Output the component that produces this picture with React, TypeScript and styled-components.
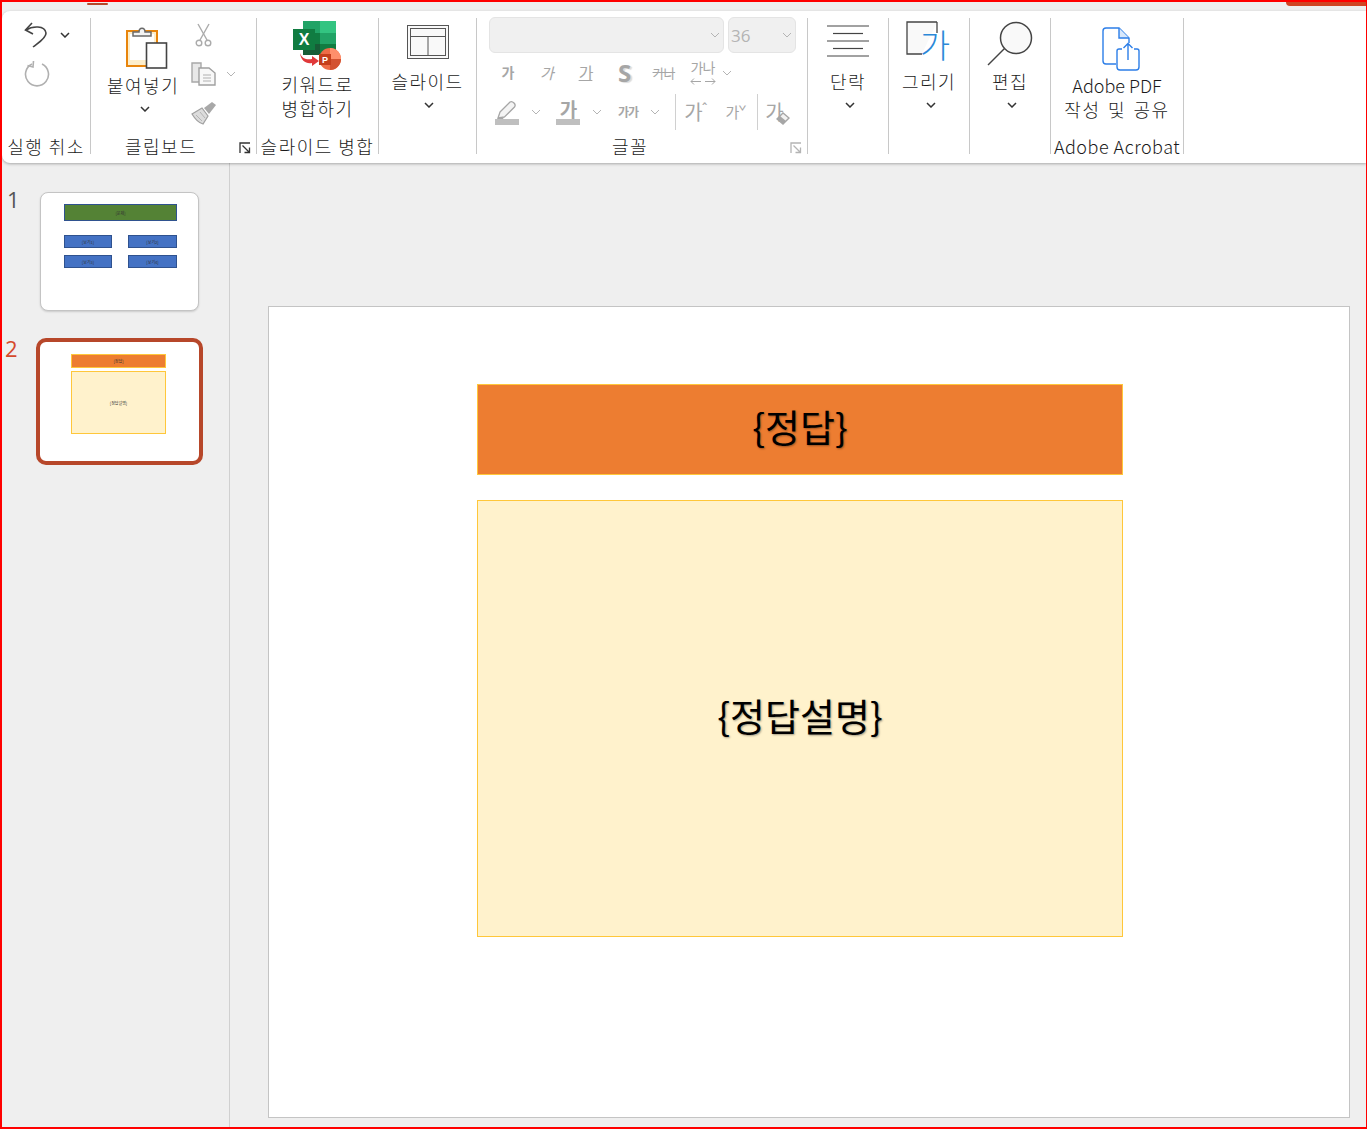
import React from "react";
import styled, { createGlobalStyle } from "styled-components";

const FONT = `"Noto Sans CJK KR", "Noto Sans", sans-serif`;
const TEXT = "#1a1a1a";
const DISABLED = "#a6a6a6";

const GlobalStyle = createGlobalStyle`
  html, body {
    margin: 0;
    padding: 0;
    background: #efefef;
  }
  * {
    box-sizing: border-box;
  }
`;

const Chevron = ({ off }: { off?: boolean }) => (
  <ChevronSvg width="10" height="6" viewBox="0 0 10 6">
    <polyline
      points="1,1 5,5 9,1"
      fill="none"
      stroke={off ? "#b4b4b4" : "#333"}
      strokeWidth={off ? 1 : 1.5}
    />
  </ChevronSvg>
);

const UndoIcon = () => (
  <svg width="24" height="26" viewBox="0 0 24 26">
    <path d="M8 1 L1.5 8 L9 12" fill="none" stroke="#444" strokeWidth="1.6" />
    <path d="M2 8 C8 4 21 3 22 11 C22.5 16 14 21 9 25" fill="none" stroke="#444" strokeWidth="1.6" />
  </svg>
);

const RedoIcon = () => (
  <svg width="26" height="27" viewBox="0 0 26 27">
    <path d="M8 4 A11.5 11.5 0 1 0 18 4" fill="none" stroke="#b0b0b0" strokeWidth="1.6" />
    <path d="M9.5 1 L9 7 L3.5 5.5" fill="none" stroke="#b0b0b0" strokeWidth="1.6" />
  </svg>
);

const PasteIcon = () => (
  <svg width="50" height="45" viewBox="-8 0 50 45">
    <rect x="1" y="7" width="30" height="35" fill="#fdeecb" stroke="#e8850c" strokeWidth="2" />
    <rect x="4" y="10" width="24" height="26" fill="#fff" />
    <path d="M7 12 V8 H13 C13 3 19 3 19 8 H25 V12 Z" fill="#f4f4f4" stroke="#6a6a6a" strokeWidth="1.5" />
    <rect x="20.5" y="19" width="20" height="25" fill="#fff" stroke="#444" strokeWidth="1.6" />
  </svg>
);

const ScissorsIcon = () => (
  <svg width="18" height="24" viewBox="0 0 18 24">
    <g fill="none" stroke="#ababab" strokeWidth="1.4">
      <path d="M3 1 L12 17" />
      <path d="M14 1 L5 17" />
      <circle cx="4" cy="20" r="2.8" />
      <circle cx="13" cy="20" r="2.8" />
    </g>
  </svg>
);

const CopyIcon = () => (
  <svg width="26" height="24" viewBox="0 0 26 24">
    <path d="M1 1 H10 V20 H1 Z" fill="#e8e8e8" stroke="#a8a8a8" strokeWidth="1.4" />
    <path d="M8 6 H18 L24 11 V23 H8 Z" fill="#f8f8f8" stroke="#a0a0a0" strokeWidth="1.4" />
    <path d="M12 13 H20 M12 16 H20 M12 19 H20" stroke="#b0b0b0" strokeWidth="1" />
  </svg>
);

const BrushIcon = () => (
  <svg width="26" height="24" viewBox="0 0 26 24">
    <path d="M1 13 L11 7 L17 15 L12 23 C8 22 4 18 1 13 Z" fill="#dcdcdc" stroke="#a0a0a0" strokeWidth="1.2" />
    <path d="M5 14 L11 20 M9 11 L14 17" stroke="#b4b4b4" strokeWidth="1" />
    <path d="M13 7 L21 1 L25 4 L18 13 Z" fill="#a8a8a8" />
  </svg>
);

const ExcelIcon = () => (
  <svg width="50" height="50" viewBox="0 0 50 50">
    <rect x="10" y="1" width="17" height="12" fill="#21a366" />
    <rect x="27" y="1" width="16" height="12" fill="#33c481" />
    <rect x="10" y="13" width="17" height="11" fill="#107c41" />
    <rect x="27" y="13" width="16" height="11" fill="#21a366" />
    <rect x="10" y="24" width="17" height="11" fill="#185c37" />
    <rect x="27" y="24" width="16" height="11" fill="#107c41" />
    <rect x="0" y="9" width="22" height="21" fill="#107c41" />
    <text x="11" y="25" textAnchor="middle" fontFamily="Liberation Sans, sans-serif" fontWeight="700" fontSize="16" fill="#fff">
      X
    </text>
    <path d="M7 33 C9 39 14 40 19 39 L19 36 L26 41 L19 46 L19 43 C13 44 8 41 7 33 Z" fill="#e0383a" />
    <circle cx="37" cy="39" r="11" fill="#ed6c47" />
    <path d="M37 28 A11 11 0 0 1 48 39 H37 Z" fill="#ff8f6b" />
    <path d="M37 50 A11 11 0 0 0 48 39 H37 Z" fill="#d35230" />
    <rect x="26" y="34" width="12" height="11" fill="#c43e1c" />
    <text x="32" y="43" textAnchor="middle" fontFamily="Liberation Sans, sans-serif" fontWeight="700" fontSize="9" fill="#fff">
      P
    </text>
  </svg>
);

const LayoutIcon = () => (
  <svg width="42" height="34" viewBox="0 0 42 34">
    <rect x="0.5" y="0.5" width="41" height="33" fill="#f9f9f9" stroke="#555" />
    <rect x="3.5" y="3.5" width="35" height="27" fill="#f9f9f9" stroke="#555" />
    <path d="M3.5 11.5 H38.5 M21 11.5 V30.5" stroke="#555" fill="none" />
  </svg>
);

const ParagraphIcon = () => (
  <svg width="42" height="32" viewBox="0 0 42 32">
    <g stroke="#444" strokeWidth="1.2">
      <path d="M0 1 H42" />
      <path d="M6 8.5 H36" />
      <path d="M0 16 H42" />
      <path d="M6 23.5 H36" />
      <path d="M0 31 H42" />
    </g>
  </svg>
);

const DrawIcon = () => (
  <svg width="46" height="50" viewBox="0 0 46 50">
    <path d="M31 1 H1 V33 H16" fill="#f9f9f9" stroke="#444" strokeWidth="1.3" />
    <path d="M31 1 V12" stroke="#444" strokeWidth="1.3" />
    <text x="29" y="37" textAnchor="middle" fontFamily='"Noto Sans CJK KR", sans-serif' fontSize="33" fontWeight="300" fill="#2b88d8">
      가
    </text>
  </svg>
);

const SearchIcon = () => (
  <svg width="46" height="46" viewBox="0 0 46 46">
    <circle cx="29" cy="17" r="15.5" fill="#f9f9f9" stroke="#444" strokeWidth="1.5" />
    <path d="M17.5 27.5 L1 44" stroke="#444" strokeWidth="1.5" />
  </svg>
);

const AdobeIcon = () => (
  <svg width="50" height="44" viewBox="-10 0 50 44">
    <path d="M14 37 H4 Q1 37 1 34 V4 Q1 1 4 1 H17 L27 11 V16" fill="none" stroke="#2c7ee8" strokeWidth="1.4" />
    <path d="M17 1 V11 H27" fill="#d8e8fb" stroke="#2c7ee8" strokeWidth="1.4" />
    <path d="M20 22 H17 Q15 22 15 24 V40 Q15 43 18 43 H34 Q37 43 37 40 V24 Q37 22 35 22 H32" fill="none" stroke="#2c7ee8" strokeWidth="1.4" />
    <path d="M26 33 V17 M21.5 21 L26 16.5 L30.5 21" fill="none" stroke="#2c7ee8" strokeWidth="1.4" />
  </svg>
);

const Launcher = ({ off }: { off?: boolean }) => (
  <LauncherSvg width="12" height="12" viewBox="0 0 12 12">
    <g fill="none" stroke={off ? "#b4b4b4" : "#333"} strokeWidth="1.3">
      <path d="M1 11 V1 H11" />
      <path d="M3.5 3.5 L10.5 10.5 M10.5 5.5 V10.5 H5.5" />
    </g>
  </LauncherSvg>
);

const PenIcon = () => (
  <svg width="24" height="25" viewBox="0 0 24 25">
    <path d="M5 12 L15 2 Q17 1 19 3 Q21 5 19.5 7 L9.5 17 L3 18 Z" fill="#f4f4f4" stroke="#a6a6a6" strokeWidth="1.3" />
    <path d="M3 18 L1 20 H7 L9.5 17 Z" fill="#a6a6a6" />
    <rect x="0" y="19" width="24" height="6" fill="#bfbfbf" />
  </svg>
);

const SmallArrows = () => (
  <svg width="26" height="9" viewBox="0 0 26 9">
    <path d="M11 4.5 H1 M4 1.5 L1 4.5 L4 7.5 M15 4.5 H25 M22 1.5 L25 4.5 L22 7.5" fill="none" stroke="#a6a6a6" strokeWidth="1" />
  </svg>
);

const LargeButton = ({
  icon,
  slot,
  top,
  lines,
  chevron,
}: {
  icon: React.ReactNode;
  slot: number;
  top: number;
  lines: string[];
  chevron?: boolean;
}) => (
  <Large>
    <IconSlot $height={slot} $top={top}>
      {icon}
    </IconSlot>
    {lines.map((line) => (
      <LargeText key={line} $latin={/[A-Za-z]/.test(line)}>
        {line}
      </LargeText>
    ))}
    {chevron && (
      <ChevronRow>
        <Chevron />
      </ChevronRow>
    )}
  </Large>
);

const Thumb = ({ index, active, children }: { index: number; active?: boolean; children: React.ReactNode }) => (
  <ThumbRow $active={active}>
    <ThumbNumber $active={active}>{index}</ThumbNumber>
    <ThumbCard $active={active}>{children}</ThumbCard>
  </ThumbRow>
);

const App = (): JSX.Element => {
  return (
    <Frame>
      <GlobalStyle />
      <TitleStrip>
        <ActiveTabMark />
        <CornerMark />
      </TitleStrip>

      <Ribbon>
        <Group $w={89}>
          <Body>
            <UndoStack>
              <UndoRow>
                <UndoIcon />
                <Chevron />
              </UndoRow>
              <RedoIcon />
            </UndoStack>
          </Body>
          <GroupLabel>
            <LabelText>실행 취소</LabelText>
          </GroupLabel>
        </Group>

        <Group $w={166}>
          <Body>
            <ClipboardRow>
              <LargeButton icon={<PasteIcon />} slot={55} top={6} lines={["붙여넣기"]} chevron />
              <ClipboardTools>
                <ToolRow>
                  <ToolIcon>
                    <ScissorsIcon />
                  </ToolIcon>
                </ToolRow>
                <ToolRow>
                  <ToolIcon>
                    <CopyIcon />
                  </ToolIcon>
                  <Chevron off />
                </ToolRow>
                <ToolRow>
                  <ToolIcon>
                    <BrushIcon />
                  </ToolIcon>
                </ToolRow>
              </ClipboardTools>
            </ClipboardRow>
          </Body>
          <GroupLabel $left={34}>
            <LabelText>클립보드</LabelText>
            <Launcher />
          </GroupLabel>
        </Group>

        <Group $w={122}>
          <Body>
            <LargeButton icon={<ExcelIcon />} slot={54} top={2} lines={["키워드로", "병합하기"]} />
          </Body>
          <GroupLabel>
            <LabelText>슬라이드 병합</LabelText>
          </GroupLabel>
        </Group>

        <Group $w={98}>
          <Body>
            <LargeButton icon={<LayoutIcon />} slot={51} top={7} lines={["슬라이드"]} chevron />
          </Body>
        </Group>

        <Group $w={331}>
          <Body>
            <FontPanel>
              <SelectRow>
                <FontSelect $w={235}>
                  <span />
                  <Chevron off />
                </FontSelect>
                <FontSelect $w={68}>
                  <SizeValue>36</SizeValue>
                  <Chevron off />
                </FontSelect>
              </SelectRow>

              <GlyphRow>
                <Cell $w={39}>
                  <Glyph $size={14} $bold>가</Glyph>
                </Cell>
                <Cell $w={39}>
                  <Glyph $size={15} $italic>가</Glyph>
                </Cell>
                <Cell $w={39}>
                  <Glyph $size={16} $underline>가</Glyph>
                </Cell>
                <Cell $w={39}>
                  <ShadowS>S</ShadowS>
                </Cell>
                <Cell $w={39}>
                  <Glyph $size={13} $strike>가나</Glyph>
                </Cell>
                <Cell $w={39}>
                  <SpacingCell>
                    <Glyph $size={14}>가나</Glyph>
                    <SmallArrows />
                  </SpacingCell>
                </Cell>
                <Chevron off />
              </GlyphRow>

              <GlyphRow $tall>
                <Cell $w={28} $ml={5}>
                  <PenIcon />
                </Cell>
                <Cell $w={11} $ml={9}>
                  <Chevron off />
                </Cell>
                <Cell $w={26} $ml={14}>
                  <ColorGlyph>
                    <Glyph $size={19} $bold>가</Glyph>
                    <ColorBar />
                  </ColorGlyph>
                </Cell>
                <Cell $w={11} $ml={10}>
                  <Chevron off />
                </Cell>
                <Cell $w={28} $ml={12}>
                  <Glyph $size={12} $bold>가가</Glyph>
                </Cell>
                <Cell $w={11} $ml={7}>
                  <Chevron off />
                </Cell>
                <RowDivider $ml={15} />
                <Cell $w={26} $ml={7}>
                  <Glyph $size={20}>가</Glyph>
                  <Caret>ˆ</Caret>
                </Cell>
                <Cell $w={24} $ml={15}>
                  <Glyph $size={15}>가</Glyph>
                  <Caret>ˇ</Caret>
                </Cell>
                <RowDivider $ml={9} />
                <Cell $w={27} $ml={3}>
                  <Glyph $size={20}>가</Glyph>
                  <EraserSvg width="14" height="16" viewBox="0 0 14 16">
                    <path d="M1 10 L7 4 L13 9 L7 15 Z" fill="#f2f2f2" stroke="#a6a6a6" strokeWidth="1.4" />
                    <path d="M1 10 L4 7 L10 12 L7 15 Z" fill="#a6a6a6" />
                  </EraserSvg>
                </Cell>
              </GlyphRow>
            </FontPanel>
          </Body>
          <GroupLabel $left={135}>
            <LabelText>글꼴</LabelText>
            <Launcher off />
          </GroupLabel>
        </Group>

        <Group $w={81}>
          <Body>
            <LargeButton icon={<ParagraphIcon />} slot={51} top={7} lines={["단락"]} chevron />
          </Body>
        </Group>

        <Group $w={81}>
          <Body>
            <LargeButton icon={<DrawIcon />} slot={51} top={3} lines={["그리기"]} chevron />
          </Body>
        </Group>

        <Group $w={81}>
          <Body>
            <LargeButton icon={<SearchIcon />} slot={51} top={3} lines={["편집"]} chevron />
          </Body>
        </Group>

        <Group $w={133}>
          <Body>
            <LargeButton icon={<AdobeIcon />} slot={55} top={9} lines={["Adobe PDF", "작성 및 공유"]} />
          </Body>
          <GroupLabel>
            <LabelText $latin>Adobe Acrobat</LabelText>
          </GroupLabel>
        </Group>
      </Ribbon>

      <Workspace>
        <Sidebar>
          <Thumb index={1}>
            <MiniBar $bg="#548235" $line="#2f528f" $w={113} $h={17}>
              {"{문제}"}
            </MiniBar>
            <MiniGrid>
              <MiniBar $bg="#4472c4" $line="#2f528f" $w={48} $h={13}>{"{보기1}"}</MiniBar>
              <MiniBar $bg="#4472c4" $line="#2f528f" $w={49} $h={13}>{"{보기2}"}</MiniBar>
              <MiniBar $bg="#4472c4" $line="#2f528f" $w={48} $h={13}>{"{보기3}"}</MiniBar>
              <MiniBar $bg="#4472c4" $line="#2f528f" $w={49} $h={13}>{"{보기4}"}</MiniBar>
            </MiniGrid>
          </Thumb>
          <Thumb index={2} active>
            <MiniStack>
              <MiniBar $bg="#ed7d31" $line="#ffc73a" $w={95} $h={14}>{"{정답}"}</MiniBar>
              <MiniBar $bg="#fff2cc" $line="#ffc73a" $w={95} $h={63}>{"{정답설명}"}</MiniBar>
            </MiniStack>
          </Thumb>
        </Sidebar>

        <Main>
          <Slide>
            <AnswerTitle>{"{정답}"}</AnswerTitle>
            <AnswerBody>{"{정답설명}"}</AnswerBody>
          </Slide>
        </Main>
      </Workspace>
    </Frame>
  );
};

export default App;

const Frame = styled.div`
  width: 1367px;
  height: 1129px;
  overflow: hidden;
  display: flex;
  flex-direction: column;
  background: #efefef;
  border-style: solid;
  border-color: #ff0000;
  border-width: 2px 1px 2px 2px;
  font-family: ${FONT};
  color: ${TEXT};
`;

const TitleStrip = styled.div`
  height: 9px;
  flex-shrink: 0;
  display: flex;
  justify-content: space-between;
  align-items: flex-start;
  padding-left: 85px;
`;

const ActiveTabMark = styled.div`
  width: 21px;
  height: 2px;
  margin-top: 1px;
  border-radius: 1px;
  background: #b7472a;
`;

const CornerMark = styled.div`
  width: 80px;
  height: 4px;
  background: #d04423;
  border-bottom-left-radius: 4px;
`;

const Ribbon = styled.div`
  height: 152px;
  flex-shrink: 0;
  display: flex;
  padding-top: 7px;
  background: #fff;
  border-radius: 8px 0 0 8px;
  box-shadow: 0 1px 3px rgba(0, 0, 0, 0.3);
  position: relative;
  z-index: 1;
`;

const Group = styled.section<{ $w: number }>`
  width: ${(p) => p.$w}px;
  height: 136px;
  flex-shrink: 0;
  display: flex;
  flex-direction: column;
  border-right: 1px solid #c8c8c8;
`;

const Body = styled.div`
  flex: 1;
  min-height: 0;
`;

const GroupLabel = styled.div<{ $left?: number }>`
  height: 20px;
  display: grid;
  grid-template-columns: ${(p) => (p.$left ? `${p.$left}px auto 1fr` : "1fr auto 1fr")};
  align-items: center;
  padding-right: ${(p) => (p.$left ? 5 : 0)}px;
`;

const LabelText = styled.span<{ $latin?: boolean }>`
  grid-column: 2;
  font-size: 18px;
  line-height: 24px;
  height: 20px;
  white-space: nowrap;
  font-weight: 300;
  letter-spacing: ${(p) => (p.$latin ? 0.5 : 1.5)}px;
`;

const LauncherSvg = styled.svg`
  grid-column: 3;
  justify-self: end;
  margin-top: 8px;
`;

const ChevronSvg = styled.svg`
  display: block;
  flex-shrink: 0;
`;

const Large = styled.div`
  display: flex;
  flex-direction: column;
  align-items: center;
`;

const IconSlot = styled.div<{ $height: number; $top: number }>`
  height: ${(p) => p.$height}px;
  padding-top: ${(p) => p.$top}px;
  & > svg {
    display: block;
  }
`;

const LargeText = styled.div<{ $latin?: boolean }>`
  font-size: 18px;
  font-weight: 300;
  line-height: 24px;
  height: 24px;
  white-space: nowrap;
  letter-spacing: ${(p) => (p.$latin ? 0 : 1.5)}px;
  word-spacing: ${(p) => (p.$latin ? 0 : 2)}px;
`;

const ChevronRow = styled.div`
  height: 24px;
  display: flex;
  align-items: center;
  padding-left: 3px;
`;

const UndoStack = styled.div`
  display: flex;
  flex-direction: column;
  gap: 12px;
  padding: 4px 0 0 22px;
  & > svg {
    display: block;
  }
`;

const UndoRow = styled.div`
  display: flex;
  align-items: center;
  gap: 12px;
`;

const ClipboardRow = styled.div`
  display: flex;
  padding-left: 16px;
  gap: 12px;
`;

const ClipboardTools = styled.div`
  display: flex;
  flex-direction: column;
  gap: 15px;
  padding-top: 5px;
`;

const ToolRow = styled.div`
  height: 24px;
  display: flex;
  align-items: center;
  gap: 9px;
`;

const ToolIcon = styled.div`
  width: 26px;
  display: flex;
  justify-content: center;
  & > svg {
    display: block;
  }
`;

const FontPanel = styled.div`
  display: flex;
  flex-direction: column;
  padding-left: 11px;
  margin-top: -1px;
`;

const SelectRow = styled.div`
  display: flex;
  gap: 4px;
  margin-left: 1px;
`;

const FontSelect = styled.div<{ $w: number }>`
  width: ${(p) => p.$w}px;
  height: 36px;
  display: flex;
  align-items: center;
  justify-content: space-between;
  padding: 0 3px 0 2px;
  background: #f0f0f0;
  border: 1px solid #e4e4e4;
  border-radius: 6px;
`;

const SizeValue = styled.span`
  font-family: "Open Sans", sans-serif;
  font-size: 17px;
  color: #b4b4b4;
`;

const GlyphRow = styled.div<{ $tall?: boolean }>`
  display: flex;
  align-items: center;
  height: ${(p) => (p.$tall ? 36 : 28)}px;
  margin-top: ${(p) => (p.$tall ? 7 : 6)}px;
`;

const Cell = styled.div<{ $w: number; $ml?: number }>`
  width: ${(p) => p.$w}px;
  margin-left: ${(p) => p.$ml ?? 0}px;
  flex-shrink: 0;
  display: flex;
  align-items: center;
  justify-content: center;
`;

const Glyph = styled.span<{
  $size: number;
  $bold?: boolean;
  $italic?: boolean;
  $underline?: boolean;
  $strike?: boolean;
}>`
  font-size: ${(p) => p.$size}px;
  line-height: 1.1;
  color: ${DISABLED};
  letter-spacing: -1px;
  white-space: nowrap;
  font-weight: ${(p) => (p.$bold ? 700 : 400)};
  font-style: ${(p) => (p.$italic ? "italic" : "normal")};
  text-decoration: ${(p) =>
    p.$underline ? "underline" : p.$strike ? "line-through" : "none"};
`;

const ShadowS = styled.span`
  font-family: "Open Sans", sans-serif;
  font-size: 24px;
  line-height: 1;
  font-weight: 700;
  color: ${DISABLED};
  text-shadow: 2px 1px 1px #dcdcdc;
`;

const SpacingCell = styled.div`
  display: flex;
  flex-direction: column;
  align-items: center;
  gap: 1px;
  & > svg {
    display: block;
  }
`;

const ColorGlyph = styled.div`
  width: 24px;
  display: flex;
  flex-direction: column;
  align-items: center;
`;

const ColorBar = styled.div`
  width: 24px;
  height: 6px;
  background: #bfbfbf;
`;

const RowDivider = styled.div<{ $ml: number }>`
  width: 1px;
  height: 36px;
  margin-left: ${(p) => p.$ml}px;
  background: #d0d0d0;
  flex-shrink: 0;
`;

const Caret = styled.span`
  font-size: 14px;
  line-height: 1;
  color: ${DISABLED};
  align-self: flex-start;
`;

const EraserSvg = styled.svg`
  flex-shrink: 0;
  margin: 10px -6px 0 -7px;
`;

const Workspace = styled.div`
  flex: 1;
  min-height: 0;
  display: flex;
`;

const Sidebar = styled.aside`
  width: 228px;
  flex-shrink: 0;
  display: flex;
  flex-direction: column;
  border-right: 1px solid #d0d0d0;
  padding-top: 29px;
  gap: 27px;
`;

const ThumbRow = styled.div<{ $active?: boolean }>`
  display: flex;
  align-items: flex-start;
  padding-left: ${(p) => (p.$active ? 3 : 5)}px;
  gap: ${(p) => (p.$active ? 19 : 24)}px;
`;

const ThumbNumber = styled.span<{ $active?: boolean }>`
  width: ${(p) => (p.$active ? 12 : 9)}px;
  font-family: "Open Sans", sans-serif;
  font-size: 22px;
  font-weight: 400;
  line-height: ${(p) => (p.$active ? 20 : 14)}px;
  color: ${(p) => (p.$active ? "#d5492c" : "#555555")};
`;

const ThumbCard = styled.div<{ $active?: boolean }>`
  width: ${(p) => (p.$active ? 167 : 159)}px;
  height: ${(p) => (p.$active ? 127 : 119)}px;
  background: #fff;
  border: ${(p) => (p.$active ? "4px solid #b7472a" : "1px solid #c4c4c4")};
  border-radius: ${(p) => (p.$active ? 10 : 8)}px;
  box-shadow: ${(p) => (p.$active ? "none" : "0 1px 2px rgba(0, 0, 0, 0.15)")};
  padding: ${(p) => (p.$active ? "12px 0 0 31px" : "11px 0 0 23px")};
`;

const MiniBar = styled.div<{ $bg: string; $line: string; $w: number; $h: number }>`
  width: ${(p) => p.$w}px;
  height: ${(p) => p.$h}px;
  background: ${(p) => p.$bg};
  border: 1px solid ${(p) => p.$line};
  display: flex;
  align-items: center;
  justify-content: center;
  font-size: 4px;
  color: #333;
  white-space: nowrap;
`;

const MiniGrid = styled.div`
  display: grid;
  grid-template-columns: 48px 49px;
  column-gap: 16px;
  row-gap: 7px;
  margin-top: 14px;
`;

const MiniStack = styled.div`
  display: flex;
  flex-direction: column;
  gap: 3px;
`;

const Main = styled.main`
  flex: 1;
  min-width: 0;
  padding: 143px 0 0 38px;
`;

const Slide = styled.div`
  width: 1082px;
  height: 812px;
  background: #fff;
  border: 1px solid #c4c4c4;
  display: flex;
  flex-direction: column;
  align-items: center;
  padding: 77px 18px 0 0;
  gap: 25px;
`;

const AnswerTitle = styled.div`
  width: 646px;
  height: 91px;
  display: flex;
  align-items: center;
  justify-content: center;
  background: #ed7d31;
  border: 1px solid #ffc73a;
  font-size: 38px;
  color: #000;
  text-shadow: 1px 1px 2px rgba(0, 0, 0, 0.35);
  padding-bottom: 8px;
`;

const AnswerBody = styled.div`
  width: 646px;
  height: 437px;
  display: flex;
  align-items: center;
  justify-content: center;
  background: #fff2cc;
  border: 1px solid #ffc73a;
  font-size: 38px;
  color: #000;
  text-shadow: 1px 1px 2px rgba(0, 0, 0, 0.35);
  padding-bottom: 8px;
`;
